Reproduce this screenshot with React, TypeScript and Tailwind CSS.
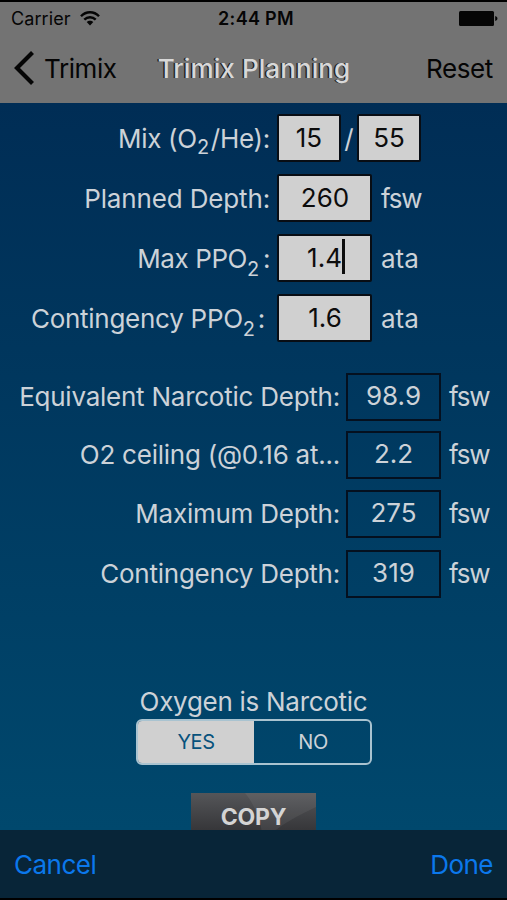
import React from 'react';

interface InputRowProps {
  label: React.ReactNode;
  labelClass: string;
  values: string[];
  unit?: string;
  active?: boolean;
}

interface ResultRowProps {
  label: string;
  value: string;
  rowClass?: string;
}

function Unit({ name }: { name: string }) {
  return <span className={name === 'fsw' ? 'text-[26px] tracking-[-1.3px]' : ''}>{name}</span>;
}

function InputRow({ label, labelClass, values, unit, active }: InputRowProps) {
  return (
    <div className="flex h-[48px] items-start">
      <div className={`shrink-0 whitespace-nowrap pt-[2px] text-right leading-[46px] ${labelClass}`}>
        {label}
      </div>
      {values.map((value, index) => (
        <React.Fragment key={index}>
          {index > 0 && <span className="w-[16px] shrink-0 pt-[2px] text-center leading-[46px]">/</span>}
          <div
            className={`flex h-[48px] shrink-0 justify-center rounded-[2px] border-2 border-[#080d14] bg-[#d0d0d0] leading-[43px] text-[#0c0c0c] ${
              values.length > 1 ? 'w-[64px]' : 'w-[95px] pl-px'
            }`}
          >
            <span>{value}</span>
            {active && <span className="-mr-[2px] mt-[3px] h-[35px] w-[3px] bg-[#0c0c0c]" />}
          </div>
        </React.Fragment>
      ))}
      {unit && (
        <span className="pl-[9px] pt-[2px] leading-[46px]">
          <Unit name={unit} />
        </span>
      )}
    </div>
  );
}

function ResultRow({ label, value, rowClass = '' }: ResultRowProps) {
  return (
    <div className={`flex h-[48px] items-start ${rowClass}`}>
      <div className="w-[341px] shrink-0 whitespace-nowrap pr-px text-right leading-[48px] tracking-[-0.24px]">
        {label}
      </div>
      <div className="ml-[5px] h-[48px] w-[95px] shrink-0 border-2 border-[#04101f] text-center leading-[42px]">
        {value}
      </div>
      <span className="pl-[8px] leading-[48px]">
        <Unit name="fsw" />
      </span>
    </div>
  );
}

export default function App() {
  return (
    <div className="flex h-[900px] w-[507px] flex-col overflow-hidden bg-black pb-[2px] pt-[2px] font-['Inter',sans-serif] text-[26px] text-[#ccd2d8]">
      <header className="h-[101px] shrink-0 bg-[#737373] text-[#050505]">
        <div className="grid h-[32px] grid-cols-3 items-center pl-[11px] pr-[9px] text-[18px]">
          <div className="flex items-center gap-[9px]">
            <span className="tracking-[0.1px]">Carrier</span>
            <svg width="20" height="15" viewBox="0 0 20 15" fill="none" stroke="currentColor" strokeWidth="2.4">
              <path d="M1 5.3C6-.1 14-.1 19 5.3" />
              <path d="M4.3 8.7c3.2-3.3 8.2-3.3 11.4 0" />
              <path d="M10 14.500 6.700 11.100c1.800-1.800 4.800-1.800 6.600 0z" fill="currentColor" stroke="none" />
            </svg>
          </div>
          <span className="pl-[3px] text-center font-semibold tracking-[0.3px]">2:44 PM</span>
          <svg className="justify-self-end" width="39" height="15" viewBox="0 0 39 15" fill="currentColor">
            <rect width="35" height="15" rx="1.5" />
            <path d="M36.2 5c3 .8 3 4.200 0 5z" />
          </svg>
        </div>
        <div className="flex h-[68px] items-center justify-between pl-[14px] pr-[14px]">
          <div className="flex w-[140px] items-center gap-[10px]">
            <svg width="20" height="34" viewBox="0 0 20 34" fill="none" stroke="currentColor" strokeWidth="4.2">
              <path d="M18.500 1.600 3 17l15.500 15.400" />
            </svg>
            <span className="tracking-[-0.4px]">Trimix</span>
          </div>
          <h1 className="pl-px font-medium tracking-[0.1px] text-[#d8d8d8] [text-shadow:-1.5px_0_0_#222]">
            Trimix Planning
          </h1>
          <span className="w-[140px] text-right tracking-[-0.4px]">Reset</span>
        </div>
      </header>

      <main className="flex min-h-0 flex-1 flex-col overflow-hidden bg-linear-to-b from-[#002d55] to-[#00486d] pt-[11px]">
        <div className="flex flex-col gap-[12px]">
          <InputRow
            label={<>Mix (O<span className="relative top-[6px] mr-[2px] text-[20px]">2</span>/He):</>}
            labelClass="mr-[7px] w-[270px] tracking-[-0.28px]"
            values={['15', '55']}
          />
          <InputRow
            label="Planned Depth:"
            labelClass="mr-[7px] w-[270px] tracking-[-0.15px]"
            values={['260']}
            unit="fsw"
          />
          <InputRow
            label={<>Max PPO<span className="relative top-[8px] mr-[4px] text-[20px]">2</span>:</>}
            labelClass="mr-[7px] w-[270px] tracking-[-0.4px]"
            values={['1.4']}
            unit="ata"
            active
          />
          <InputRow
            label={<>Contingency PPO<span className="relative top-[8px] mr-[3px] text-[20px]">2</span>:</>}
            labelClass="mr-[12px] w-[265px] tracking-[-0.27px]"
            values={['1.6']}
            unit="ata"
          />
        </div>

        <div className="mt-[31px]">
          <ResultRow label="Equivalent Narcotic Depth:" value="98.9" />
          <ResultRow label="O2 ceiling (@0.16 at..." value="2.2" rowClass="mt-[10px]" />
          <ResultRow label="Maximum Depth:" value="275" rowClass="mt-[11px]" />
          <ResultRow label="Contingency Depth:" value="319" rowClass="mt-[12px]" />
        </div>

        <div className="mt-[87px] flex flex-col items-center">
          <span className="leading-[34px] tracking-[-0.28px]">Oxygen is Narcotic</span>
          <div className="ml-px flex h-[46px] w-[236px] overflow-hidden rounded-[6px] border-2 border-[#a9c3d0] text-[20px] leading-[43px]">
            <span className="w-[116px] bg-[#d0d0d0] text-center tracking-[-0.4px] text-[#07527c]">YES</span>
            <span className="flex-1 pl-[2px] text-center tracking-[-0.4px]">NO</span>
          </div>
          <div className="relative mt-[28px] h-[50px] w-[125px] shrink-0 bg-linear-to-b from-[#555659] to-[#2c2c2f] text-center text-[23px] leading-[48px] font-bold tracking-[-0.2px] text-[#d4d4d4]">
            <svg className="absolute left-0 top-0" width="125" height="50" viewBox="0 0 125 50">
              <path d="M54 0h71v14C103 25 84 34 72 50 71 30 65 14 54 0z" fill="#fff" opacity=".06" />
            </svg>
            <span className="relative">COPY</span>
          </div>
        </div>
      </main>

      <footer className="flex h-[68px] shrink-0 items-center justify-between bg-[#082538] px-[14px] text-[#0b78ec]">
        <span className="tracking-[-0.5px]">Cancel</span>
        <span className="tracking-[-0.5px]">Done</span>
      </footer>
    </div>
  );
}
